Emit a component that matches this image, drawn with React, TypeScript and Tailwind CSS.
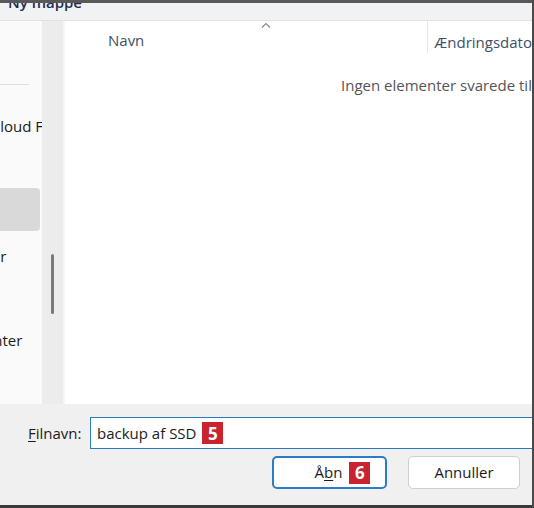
import React from "react";

const font = { fontFamily: '"Open Sans", "Noto Sans", sans-serif' };

function Badge({ n }: { n: string }) {
  return (
    <span className="inline-flex h-[22px] w-[21px] items-center justify-center bg-[#c8232f] text-[17px] font-bold leading-none text-white">
      {n}
    </span>
  );
}

export default function App() {
  return (
    <div
      style={font}
      className="flex h-[508px] w-[534px] flex-col overflow-hidden border-r-2 border-[#4a4a4a] bg-[#f0f0f0] text-[15px] text-[#1b1b1b]"
    >
      {/* window top edge */}
      <div className="h-[3px] shrink-0 bg-[#595959]" />

      {/* toolbar, cut at the top */}
      <div className="relative h-[18px] shrink-0 overflow-hidden border-b border-[#e2e2e2] bg-[#f1f2f4]">
        <span className="absolute left-[8px] top-[-12px] text-[15px] font-semibold text-[#1f2d52]">
          Ny mappe
        </span>
      </div>

      {/* middle */}
      <div className="flex h-[383px] shrink-0">
        {/* left nav */}
        <div className="w-[42px] shrink-0 overflow-hidden bg-[#fafafa] pt-[63px]">
          <div className="h-px w-[29px] bg-[#dedede]" />
          <div className="ml-[-13px] mt-[32px] whitespace-nowrap leading-[18px]">iCloud Fotos</div>
          <div className="mt-[53px] h-[43px] w-[40px] rounded-r-[4px] bg-[#d9d9d9]" />
          <div className="ml-[-73px] mt-[16px] whitespace-nowrap leading-[18px]">Overførsler</div>
          <div className="ml-[-66px] mt-[66px] whitespace-nowrap leading-[18px]">Dokumenter</div>
        </div>

        {/* scrollbar */}
        <div className="flex w-[21px] shrink-0 justify-center bg-[#ececec] pt-[233px]">
          <div className="h-[60px] w-[3px] rounded-full bg-[#7a7a7a]" />
        </div>

        {/* content */}
        <div className="flex-1 border-l-2 border-[#f6f6f6] bg-white">
          <div className="relative flex h-[30px] items-end text-[#3d4f6c]">
            <span className="ml-[43px] leading-[22px]">Navn</span>
            <svg
              className="absolute left-[196px] top-[1px]"
              width="10"
              height="6"
              viewBox="0 0 10 6"
              fill="none"
              stroke="#8a8a8a"
              strokeWidth="1.2"
            >
              <path d="M1 5.5 L5 1.5 L9 5.5" />
            </svg>
            <div className="ml-auto flex h-[32px] self-start border-l border-[#e6e6e6] pl-[6px]">
              <span className="mt-[10px] whitespace-nowrap leading-[22px]">Ændringsdato</span>
            </div>
          </div>
          <div className="ml-[276px] mt-[23px] whitespace-nowrap text-[#555]">
            Ingen elementer svarede til
          </div>
        </div>
      </div>

      {/* bottom area */}
      <div className="flex flex-1 flex-col">
        <div className="mt-[13px] flex items-center">
          <span className="ml-[28px] w-[62px] text-[#1b1b1b]">
            <span className="underline underline-offset-2">F</span>ilnavn:
          </span>
          <div className="flex h-[32px] flex-1 items-center gap-[6px] border border-r-0 border-[#2a78c0] bg-white pl-[6px]">
            <span>backup af SSD</span>
            <Badge n="5" />
          </div>
        </div>
        <div className="mt-[7px] flex gap-[21px] pl-[272px]">
          <button className="flex h-[33px] w-[115px] items-center justify-center gap-[7px] rounded-[5px] border-2 border-[#2c7bc4] bg-white pl-[26px]">
            <span>
              Å<span className="underline underline-offset-2">b</span>n
            </span>
            <Badge n="6" />
          </button>
          <button className="flex h-[33px] w-[112px] items-center justify-center rounded-[5px] border border-[#cfcfcf] bg-white">
            Annuller
          </button>
        </div>
      </div>

      {/* window bottom edge */}
      <div className="h-[3px] shrink-0 bg-[#3a3a3a]" />
    </div>
  );
}
